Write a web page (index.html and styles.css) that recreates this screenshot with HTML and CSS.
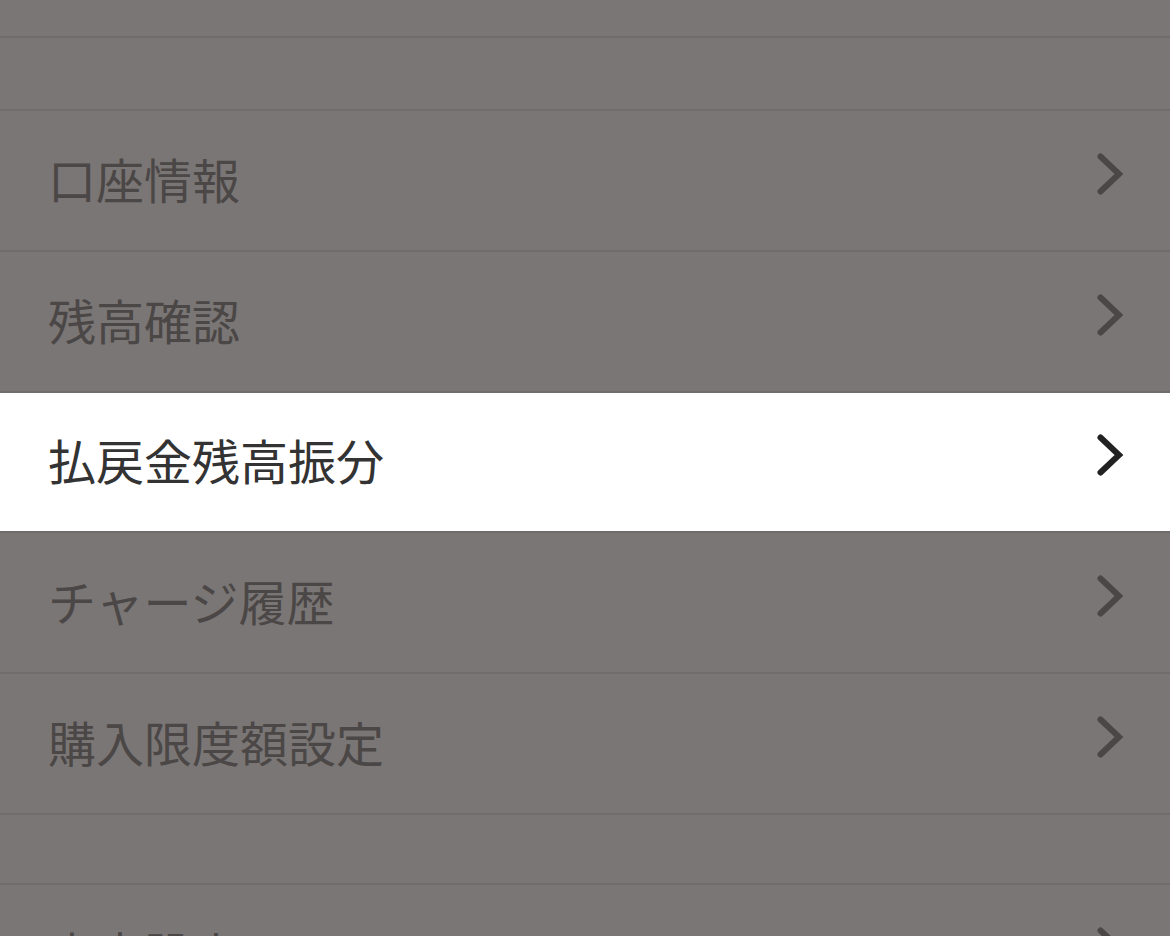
FILE: index.html
```html
<!DOCTYPE html>
<html lang="ja">
<head>
<meta charset="utf-8">
<title>メニュー</title>
<link rel="stylesheet" href="styles.css">
</head>
<body>
<ul class="menu">
  <li class="row row-top"></li>
  <li class="row row-spacer"></li>
  <li class="row item"><span class="label">口座情報</span><svg class="chev" viewBox="0 0 30 48" width="30" height="48"><path d="M5.5 6.5 L24 24 L5.5 41.5"/></svg></li>
  <li class="row item"><span class="label">残高確認</span><svg class="chev" viewBox="0 0 30 48" width="30" height="48"><path d="M5.5 6.5 L24 24 L5.5 41.5"/></svg></li>
  <li class="row item active"><span class="label">払戻金残高振分</span><svg class="chev" viewBox="0 0 30 48" width="30" height="48"><path d="M5.5 6.5 L24 24 L5.5 41.5"/></svg></li>
  <li class="row item"><span class="label">チャージ履歴</span><svg class="chev" viewBox="0 0 30 48" width="30" height="48"><path d="M5.5 6.5 L24 24 L5.5 41.5"/></svg></li>
  <li class="row item"><span class="label">購入限度額設定</span><svg class="chev" viewBox="0 0 30 48" width="30" height="48"><path d="M5.5 6.5 L24 24 L5.5 41.5"/></svg></li>
  <li class="row row-spacer short"></li>
  <li class="row item"><span class="label">文字設定</span><svg class="chev" viewBox="0 0 30 48" width="30" height="48"><path d="M5.5 6.5 L24 24 L5.5 41.5"/></svg></li>
</ul>
</body>
</html>
```

FILE: styles.css
```css
html, body {
  margin: 0;
  padding: 0;
  background: #7a7675;
  overflow: hidden;
}

body {
  font-family: "Noto Sans CJK JP", "Noto Sans", sans-serif;
}

.menu {
  list-style: none;
  margin: 0;
  padding: 0;
  display: flex;
  flex-direction: column;
}

.row {
  box-sizing: border-box;
  border-bottom: 2px solid #706c6b;
  flex: none;
}

.row-top {
  height: 38px;
}

.row-spacer {
  height: 73px;
}

.row-spacer.short {
  height: 70px;
}

.item {
  height: 141px;
  display: flex;
  align-items: center;
  justify-content: space-between;
  padding: 0 45px 0 48px;
  color: #4b4746;
}

.label {
  font-size: 48px;
  line-height: 1;
  font-weight: 400;
  margin-bottom: 6px;
}

.chev {
  display: block;
  margin-bottom: 14px;
}

.chev path {
  fill: none;
  stroke: #4b4746;
  stroke-width: 6;
  stroke-linecap: round;
  stroke-linejoin: miter;
}

.item.active {
  background: #ffffff;
  color: #333333;
  border-top: 1px solid #706c6b;
  margin-top: -1px;
}

.item.active .chev path {
  stroke: #222222;
}
```
